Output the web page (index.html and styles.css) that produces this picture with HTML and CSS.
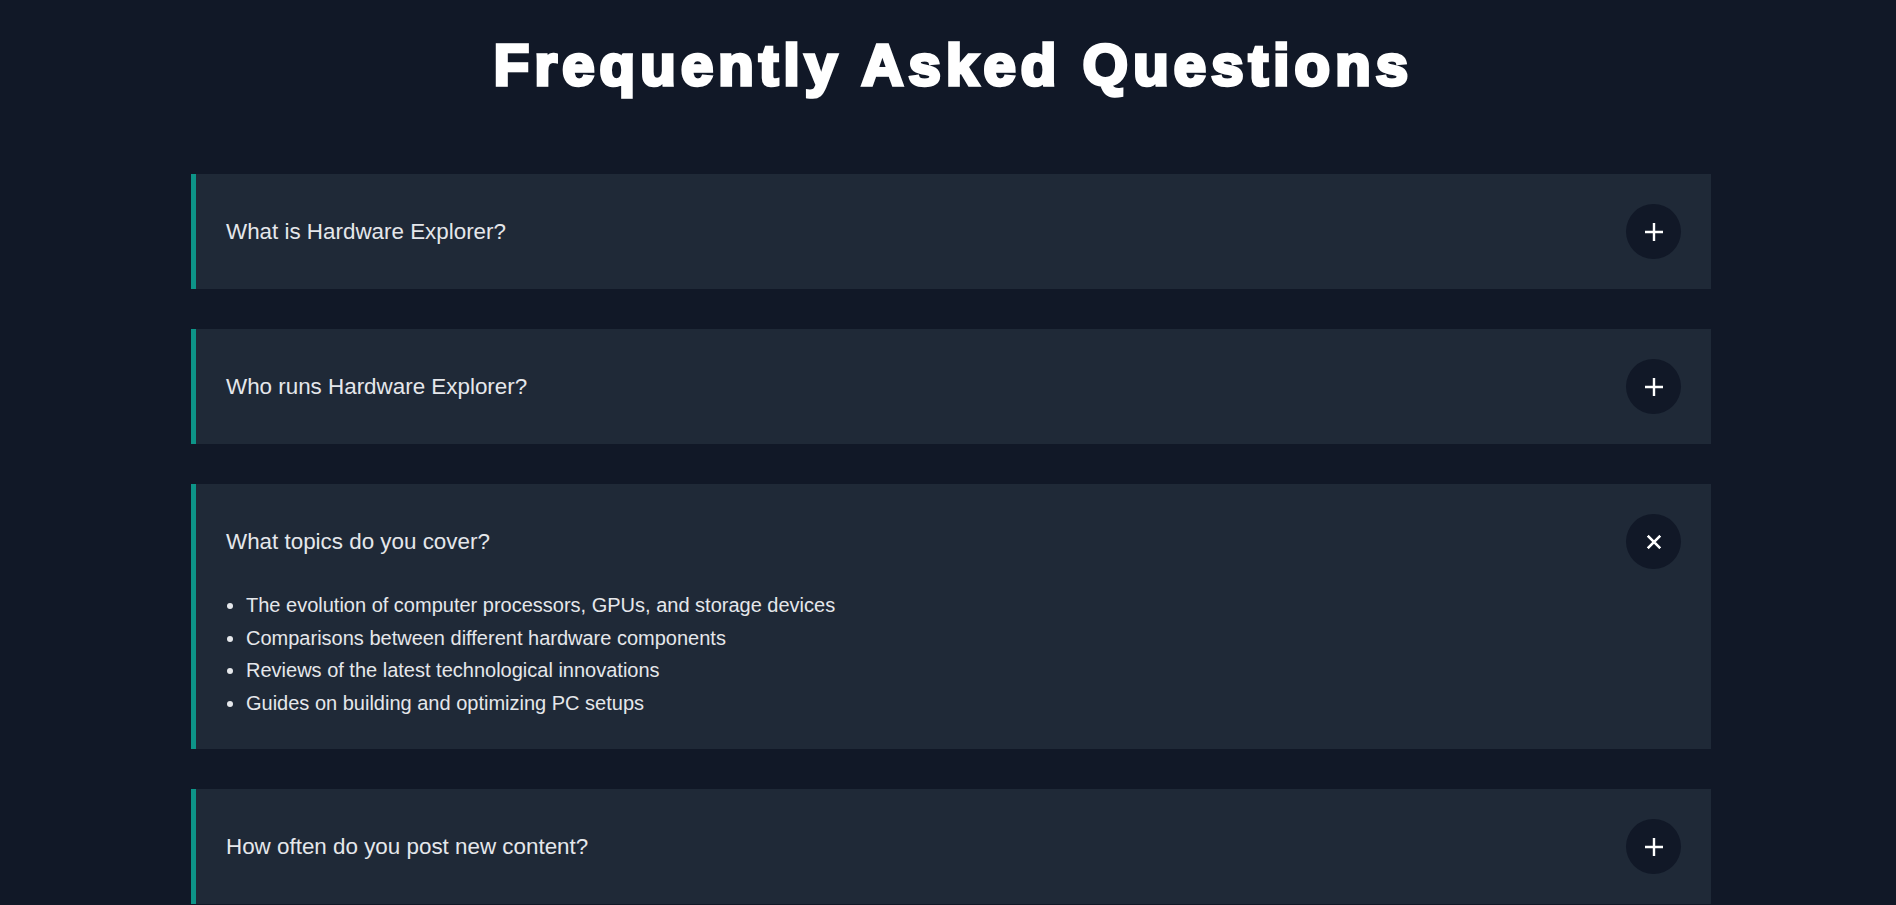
FILE: index.html
```html
<!DOCTYPE html>
<html lang="en">
<head>
<meta charset="utf-8">
<title>FAQ - Hardware Explorer</title>
<link rel="stylesheet" href="styles.css">
</head>
<body>
<main class="page">
  <section class="faq">
    <h1 class="faq-title">Frequently Asked Questions</h1>
    <div class="faq-list">
      <div class="faq-item">
        <div class="faq-head">
          <span class="faq-q">What is Hardware Explorer?</span>
          <span class="faq-btn"><svg class="icon" viewBox="0 0 18 18" width="18" height="18"><path d="M9 0v18M0 9h18" stroke="#fff" stroke-width="2.4"/></svg></span>
        </div>
      </div>
      <div class="faq-item">
        <div class="faq-head">
          <span class="faq-q">Who runs Hardware Explorer?</span>
          <span class="faq-btn"><svg class="icon" viewBox="0 0 18 18" width="18" height="18"><path d="M9 0v18M0 9h18" stroke="#fff" stroke-width="2.4"/></svg></span>
        </div>
      </div>
      <div class="faq-item open">
        <div class="faq-head">
          <span class="faq-q">What topics do you cover?</span>
          <span class="faq-btn"><svg class="icon icon-close" viewBox="0 0 18 18" width="18" height="18"><path d="M9 0v18M0 9h18" stroke="#fff" stroke-width="2.6"/></svg></span>
        </div>
        <ul class="faq-answer">
          <li>The evolution of computer processors, GPUs, and storage devices</li>
          <li>Comparisons between different hardware components</li>
          <li>Reviews of the latest technological innovations</li>
          <li>Guides on building and optimizing PC setups</li>
        </ul>
      </div>
      <div class="faq-item">
        <div class="faq-head">
          <span class="faq-q">How often do you post new content?</span>
          <span class="faq-btn"><svg class="icon" viewBox="0 0 18 18" width="18" height="18"><path d="M9 0v18M0 9h18" stroke="#fff" stroke-width="2.4"/></svg></span>
        </div>
      </div>
    </div>
  </section>
</main>
</body>
</html>
```

FILE: styles.css
```css
html, body {
  margin: 0;
  padding: 0;
  background: #111827;
}
body {
  font-family: "Liberation Sans", Arial, sans-serif;
  color: #e5e7eb;
}
.page {
  padding: 0 0 60px 6px;
}
.faq {
  max-width: 1520px;
  margin: 0 auto;
}
.faq-title {
  margin: 0;
  padding-top: 32px;
  padding-left: 5px;
  font-family: "Arial Black", "Liberation Sans", Arial, sans-serif;
  font-weight: 900;
  font-size: 58px;
  line-height: 66px;
  text-align: center;
  color: #ffffff;
  letter-spacing: 5.2px;
  -webkit-text-stroke: 3.6px #ffffff;
  text-shadow: 0.8px 0 0 #ffffff, -0.8px 0 0 #ffffff;
}
.faq-list {
  margin-top: 76px;
  display: flex;
  flex-direction: column;
  gap: 40px;
}
.faq-item {
  background: #1f2937;
  border-left: 5px solid #0d9488;
  padding: 30px;
}
.faq-head {
  display: flex;
  align-items: center;
  justify-content: space-between;
  height: 55px;
}
.faq-q {
  font-size: 22.4px;
  color: #e5e7eb;
}
.faq-btn {
  width: 55px;
  height: 55px;
  border-radius: 50%;
  background: #111827;
  display: flex;
  align-items: center;
  justify-content: center;
  flex-shrink: 0;
}
.icon {
  display: block;
}
.icon-close {
  transform: rotate(45deg);
}
.faq-answer {
  margin: 20px 0 0;
  padding-left: 20px;
  font-size: 20px;
  line-height: 1.625;
  color: #e5e7eb;
}
```
